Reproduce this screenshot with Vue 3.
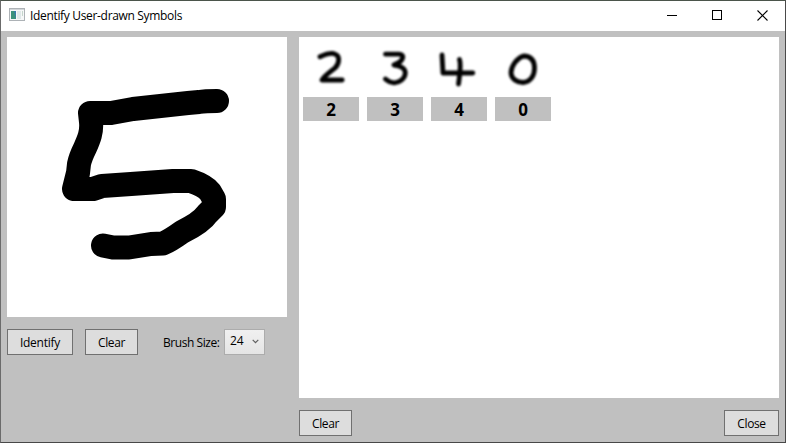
<script setup>
const results = [
  { label: '2', path: 'M17 15.700 C22 13.500 28 12 31 12.700 C38 14.500 36 23 32 27 C27 31 20 36 19 39 H39.200' },
  { label: '3', path: 'M18.500 13.200 H32 C38 13.500 36 18.500 32 21.500 L27 24 C34 24.500 38.300 28 38.300 32 C38 38 32 42 27 41.800 C22 41.500 21 40 18.500 38' },
  { label: '4', path: 'M11 14 L12 32 H41.800 M28.500 18.500 C30.500 24 28.500 35 27.500 43' },
  { label: '0', path: 'M28.500 15 C22 17 16 25 16 32 C16.500 38 22 41.500 28 41.500 C36 41 39.500 34 39.500 27 C39.500 19 36 15 28.500 15 Z' },
]
</script>

<template>
  <div class="window">
    <header class="titlebar">
      <svg class="app-icon" width="16" height="14" viewBox="0 0 16 14">
        <rect x=".5" y=".5" width="15" height="12" fill="#f6f7f8" stroke="#adb2b6" />
        <rect x="1" y="1" width="14" height="1" fill="#d2d6d9" />
        <rect x="2" y="3" width="5" height="8" fill="#397caa" />
        <path d="M2 3 H5 L7 11 H2 Z" fill="#3b927b" />
        <rect x="8" y="3" width="4" height="8" fill="#dfe8e8" />
        <rect x="13" y="3" width="1" height="5" fill="#c5d6cc" />
      </svg>
      <span class="title">Identify User-drawn Symbols</span>
      <div class="controls">
        <svg width="10" height="10"><rect y="5" width="10" height="1" /></svg>
        <svg width="10" height="10"><rect x=".5" y=".5" width="9" height="9" fill="none" stroke="#000" /></svg>
        <svg width="11" height="11"><path d="M.5 .5 L10.500 10.500 M10.500 .5 L.5 10.500" stroke="#000" stroke-width="1.100" /></svg>
      </div>
    </header>
    <main class="content">
      <section class="left">
        <svg class="canvas" width="280" height="280" viewBox="0 0 280 280">
          <path
            d="M210 64 C204 64 198 64 192 65 L181 66 L126 72 L104 76 H83 L84 85 C85 95 82 102 78 111 C75 117 73 122 72 127 L71 136 L67 152 H86 L95 149 L124 147 L166 144 H184 C193 147 199 150 203 155 L207 162 V170 L200 177 C196 183 185 190 175 195 C168 200 162 204 156 206.500 L144 207 L122 210.500 H106 L96 208.500"
            fill="none" stroke="#000" stroke-width="24" stroke-linecap="round" stroke-linejoin="round" />
        </svg>
        <div class="tools">
          <button class="btn identify"><span>Identify</span></button>
          <button class="btn clear"><span>Clear</span></button>
          <label class="brush">Brush Size:</label>
          <div class="combo">
            <span>24</span>
            <svg width="7" height="5"><path d="M.7 .8 L3.500 3.600 L6.300 .8" fill="none" stroke="#606060" stroke-width="1.200" /></svg>
          </div>
        </div>
      </section>
      <section class="right">
        <div class="results">
          <figure v-for="r in results" :key="r.label" class="result">
            <svg class="glyph" width="56" height="56" viewBox="0 0 56 56"><path :d="r.path" /></svg>
            <figcaption>{{ r.label }}</figcaption>
          </figure>
        </div>
        <div class="footer">
          <button class="btn clear"><span>Clear</span></button>
          <button class="btn close"><span>Close</span></button>
        </div>
      </section>
    </main>
  </div>
</template>

<style>
body { margin: 0; overflow: hidden; }
</style>

<style scoped>
.window {
  box-sizing: border-box;
  width: 786px;
  height: 443px;
  border: 1px solid #6b6b6b;
  border-top-color: #4b554b;
  border-right-color: #4a4a4a;
  border-bottom-color: #484848;
  background: #c0c0c0;
  font: 12px/16px "Open Sans", "Noto Sans", sans-serif;
  letter-spacing: -0.37px;
  color: #000;
}
.titlebar {
  display: flex;
  align-items: center;
  height: 30px;
  padding: 0 17px 0 8px;
  box-sizing: border-box;
  background: #fff;
}
.app-icon { margin-top: -2px; }
.title { margin-left: 5px; white-space: nowrap; letter-spacing: -0.33px; }
.controls { display: flex; align-items: center; gap: 35px; margin-left: auto; margin-top: -2px; }
.content { display: flex; gap: 12px; padding: 6px; }
.left { width: 280px; }
.canvas { display: block; background: #fff; }
.tools { display: flex; margin-top: 12px; height: 26px; }
.btn {
  box-sizing: border-box;
  height: 26px;
  padding: 1px 0 0;
  border: 1px solid #707070;
  border-radius: 0;
  background: #ddd;
  font: inherit;
  letter-spacing: inherit;
  color: #000;
}
.identify { width: 66px; margin-right: 12px; letter-spacing: -0.25px; }
.clear { width: 53px; }
.close { width: 55px; }
.brush { width: 61px; margin-left: 25px; padding-top: 6px; box-sizing: border-box; white-space: nowrap; letter-spacing: -0.45px; }
.combo {
  box-sizing: border-box;
  display: flex;
  align-items: center;
  justify-content: space-between;
  width: 41px;
  height: 26px;
  padding: 0 5px 2px;
  border: 1px solid #acacac;
  background: linear-gradient(#f0f0f0, #e5e5e5);
  letter-spacing: -0.2px;
}
.right { width: 480px; }
.results {
  box-sizing: border-box;
  display: flex;
  gap: 8px;
  height: 361px;
  padding: 4px;
  background: #fff;
}
.result { width: 56px; margin: 0; }
.glyph { display: block; filter: blur(0.8px); }
.glyph path {
  fill: none;
  stroke: #000;
  stroke-width: 4.8;
  stroke-linecap: round;
  stroke-linejoin: round;
}
figcaption {
  height: 24px;
  background: #c0c0c0;
  font: bold 17px/25px "Open Sans", "Noto Sans", sans-serif;
  text-align: center;
  letter-spacing: 0;
}
.footer { display: flex; justify-content: space-between; margin-top: 12px; }
</style>
